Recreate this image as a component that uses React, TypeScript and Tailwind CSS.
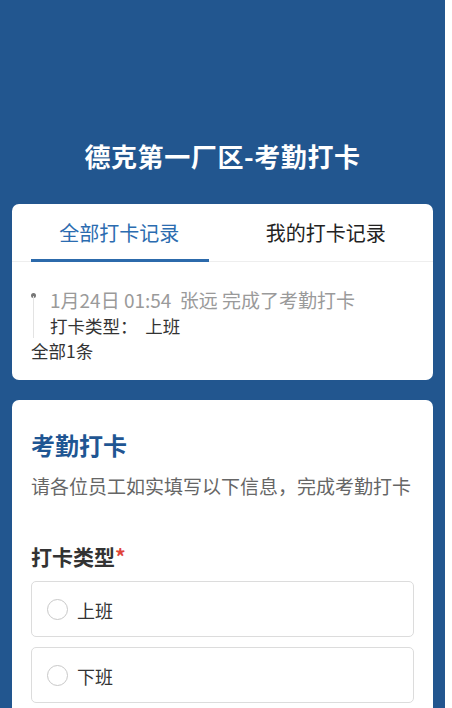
import React from "react";

const font = { fontFamily: '"Noto Sans CJK SC", "Noto Sans", sans-serif' };

function Radio({ label }: { label: string }) {
  return (
    <div className="flex h-[56px] items-center rounded-[5px] border border-[#dcdcdc] pl-[15px]">
      <span className="h-[21px] w-[21px] rounded-full border border-[#c8c8c8] bg-white" />
      <span className="ml-[9px] mt-[2px] text-[18px] text-[#333]">{label}</span>
    </div>
  );
}

export default function App() {
  return (
    <div className="min-h-[708px] w-[452px] bg-white" style={font}>
      <div className="min-h-[708px] w-[445px] bg-[#22568f] px-[12px] pt-[137px]">
        <h1 className="text-center text-[26px] font-bold leading-[38px] tracking-[0.6px] text-white">
          德克第一厂区-考勤打卡
        </h1>
        <div className="mt-[29px] rounded-[7px] bg-white">
          <div className="relative flex h-[58px] border-b border-[#eeeeee]">
            <div className="flex flex-1 items-center justify-center pl-[4px] text-[20px] text-[#2b6cb0]">
              全部打卡记录
            </div>
            <div className="flex flex-1 items-center justify-center pr-[4px] text-[20px] text-[#222]">
              我的打卡记录
            </div>
            <div className="absolute bottom-[-1px] left-[19px] h-[3px] w-[178px] bg-[#2c6aab]" />
          </div>
          <div className="px-[19px] pb-[18px] pt-[25px]">
            <div className="relative pl-[19px]">
              <span className="absolute left-[0px] top-[6px] h-[5px] w-[5px] rounded-full bg-[#777]" />
              <span className="absolute left-[2px] top-[9px] h-[42px] w-px bg-[#e3e3e3]" />
              <div className="text-[19px] leading-[26px] text-[#9a9a9a]">
                1月24日 01:54&nbsp;&nbsp;张远 完成了考勤打卡
              </div>
              <div className="text-[17.5px] leading-[26px] text-[#333]">打卡类型：&nbsp;&nbsp;上班</div>
            </div>
            <div className="text-[17.5px] leading-[23px] text-[#333]">全部1条</div>
          </div>
        </div>
        <div className="mt-[20px] rounded-t-[7px] bg-white px-[19px] pb-[10px] pt-[28px]">
          <div className="text-[24px] font-bold leading-[34px] text-[#1f5693]">考勤打卡</div>
          <div className="mt-[10px] text-[19px] leading-[28px] text-[#666]">
            请各位员工如实填写以下信息，完成考勤打卡
          </div>
          <div className="mt-[41px] text-[21px] font-bold leading-[30px] text-[#333]">
            打卡类型<span className="text-[#e0443a]">*</span>
          </div>
          <div className="mt-[10px] flex flex-col gap-[10px]">
            <Radio label="上班" />
            <Radio label="下班" />
          </div>
        </div>
      </div>
    </div>
  );
}
